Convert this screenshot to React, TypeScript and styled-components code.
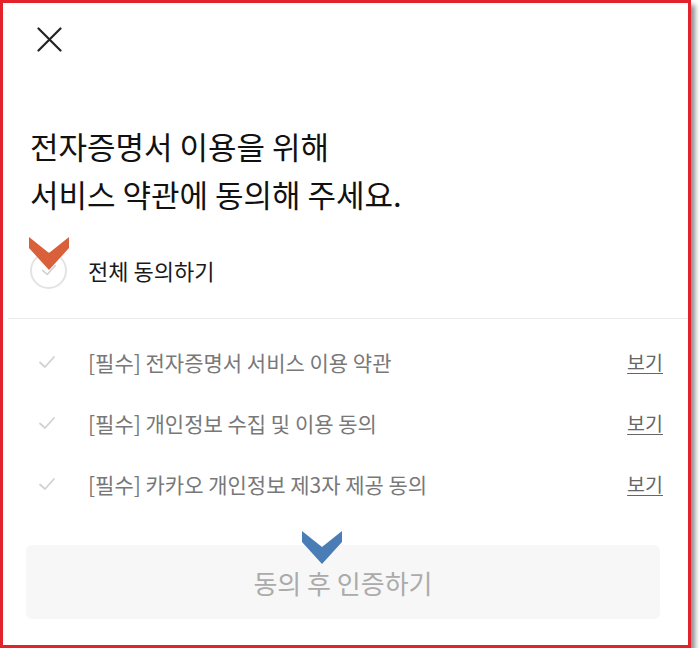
import React from "react";
import styled, { createGlobalStyle } from "styled-components";

const GlobalStyle = createGlobalStyle`
  html, body {
    margin: 0;
    padding: 0;
    background: #ffffff;
  }
  body {
    font-family: "Noto Sans CJK KR", "Noto Sans", sans-serif;
    -webkit-font-smoothing: antialiased;
  }
`;

const Frame = styled.div`
  position: relative;
  box-sizing: border-box;
  width: 691px;
  height: 648px;
  border: 3px solid #e2232c;
  background: #ffffff;
  box-shadow: 4px 5px 5px rgba(0, 0, 0, 0.45);
  display: flex;
  flex-direction: column;
  overflow: visible;
`;

const Header = styled.div`
  display: flex;
  align-items: center;
  height: 25px;
  padding: 24px 0 0 34px;
`;

const CloseButton = styled.button`
  width: 25px;
  height: 25px;
  padding: 0;
  border: none;
  background: none;
  display: flex;
  cursor: pointer;
`;

const Title = styled.h1`
  margin: 70px 0 0 27px;
  font-size: 31px;
  line-height: 48px;
  font-weight: 400;
  color: #111111;
`;

const AllAgreeRow = styled.div`
  position: relative;
  display: flex;
  align-items: center;
  gap: 21px;
  height: 56px;
  margin-top: 24px;
  padding-left: 27px;
`;

const CircleCheck = styled.span`
  box-sizing: border-box;
  width: 37px;
  height: 37px;
  border-radius: 50%;
  border: 2px solid #e3e3e3;
  display: flex;
  align-items: center;
  justify-content: center;
`;

const AllAgreeLabel = styled.span`
  font-size: 22px;
  color: #1a1a1a;
  font-weight: 400;
`;

const Divider = styled.div`
  height: 1px;
  margin: 20px 0 0 5px;
  background: #ececec;
`;

const TermList = styled.ul`
  list-style: none;
  margin: 12px 0 0;
  padding: 0 25px 0 34px;
`;

const TermRow = styled.li`
  display: flex;
  align-items: center;
  height: 61px;
`;

const TermCheck = styled.span`
  width: 20px;
  display: flex;
  margin-right: 31px;
`;

const TermLabel = styled.span`
  flex: 1;
  font-size: 21px;
  color: #787878;
`;

const ViewLink = styled.a`
  font-size: 19.5px;
  color: #666666;
  text-decoration: underline;
  text-underline-offset: 3px;
  cursor: pointer;
`;

const SubmitButton = styled.button`
  position: relative;
  box-sizing: border-box;
  height: 74px;
  margin: 31px 28px 0 23px;
  border: none;
  border-radius: 6px;
  background: #f7f7f7;
  color: #ababab;
  font-family: "Noto Sans CJK KR", "Noto Sans", sans-serif;
  font-size: 26px;
  font-weight: 400;
`;

const Marker = styled.svg<{ $left: number; $top: number }>`
  position: absolute;
  left: ${(p) => p.$left}px;
  top: ${(p) => p.$top}px;
  width: 40px;
  height: 33px;
  pointer-events: none;
`;

const Chevron = ({ color, left, top }: { color: string; left: number; top: number }) => (
  <Marker $left={left} $top={top} viewBox="0 0 40 33">
    <polygon points="0,0 20,16 40,0 40,11 20,33 0,11" fill={color} />
  </Marker>
);

const CheckMark = ({ color, size }: { color: string; size: number }) => (
  <svg width={size} height={size} viewBox="0 0 20 20">
    <path d="M3 10.5 L8 15 L17 5" fill="none" stroke={color} strokeWidth="1.8" strokeLinecap="round" strokeLinejoin="round" />
  </svg>
);

const terms = [
  "[필수] 전자증명서 서비스 이용 약관",
  "[필수] 개인정보 수집 및 이용 동의",
  "[필수] 카카오 개인정보 제3자 제공 동의",
];

export default function App() {
  return (
    <>
      <GlobalStyle />
      <Frame>
        <Header>
          <CloseButton aria-label="닫기">
            <svg width="25" height="25" viewBox="0 0 25 25">
              <path d="M1.5 1.5 L23.5 23.5 M23.5 1.5 L1.5 23.5" stroke="#222" strokeWidth="2.2" strokeLinecap="round" />
            </svg>
          </CloseButton>
        </Header>
        <Title>
          전자증명서 이용을 위해
          <br />
          서비스 약관에 동의해 주세요.
        </Title>
        <AllAgreeRow>
          <CircleCheck>
            <CheckMark color="#cfcfcf" size={18} />
          </CircleCheck>
          <AllAgreeLabel>전체 동의하기</AllAgreeLabel>
          <Chevron color="#d9603a" left={26} top={-5} />
        </AllAgreeRow>
        <Divider />
        <TermList>
          {terms.map((t) => (
            <TermRow key={t}>
              <TermCheck>
                <CheckMark color="#d2d2d2" size={20} />
              </TermCheck>
              <TermLabel>{t}</TermLabel>
              <ViewLink>보기</ViewLink>
            </TermRow>
          ))}
        </TermList>
        <SubmitButton disabled>
          동의 후 인증하기
          <Chevron color="#4a7db5" left={276} top={-14} />
        </SubmitButton>
      </Frame>
    </>
  );
}
